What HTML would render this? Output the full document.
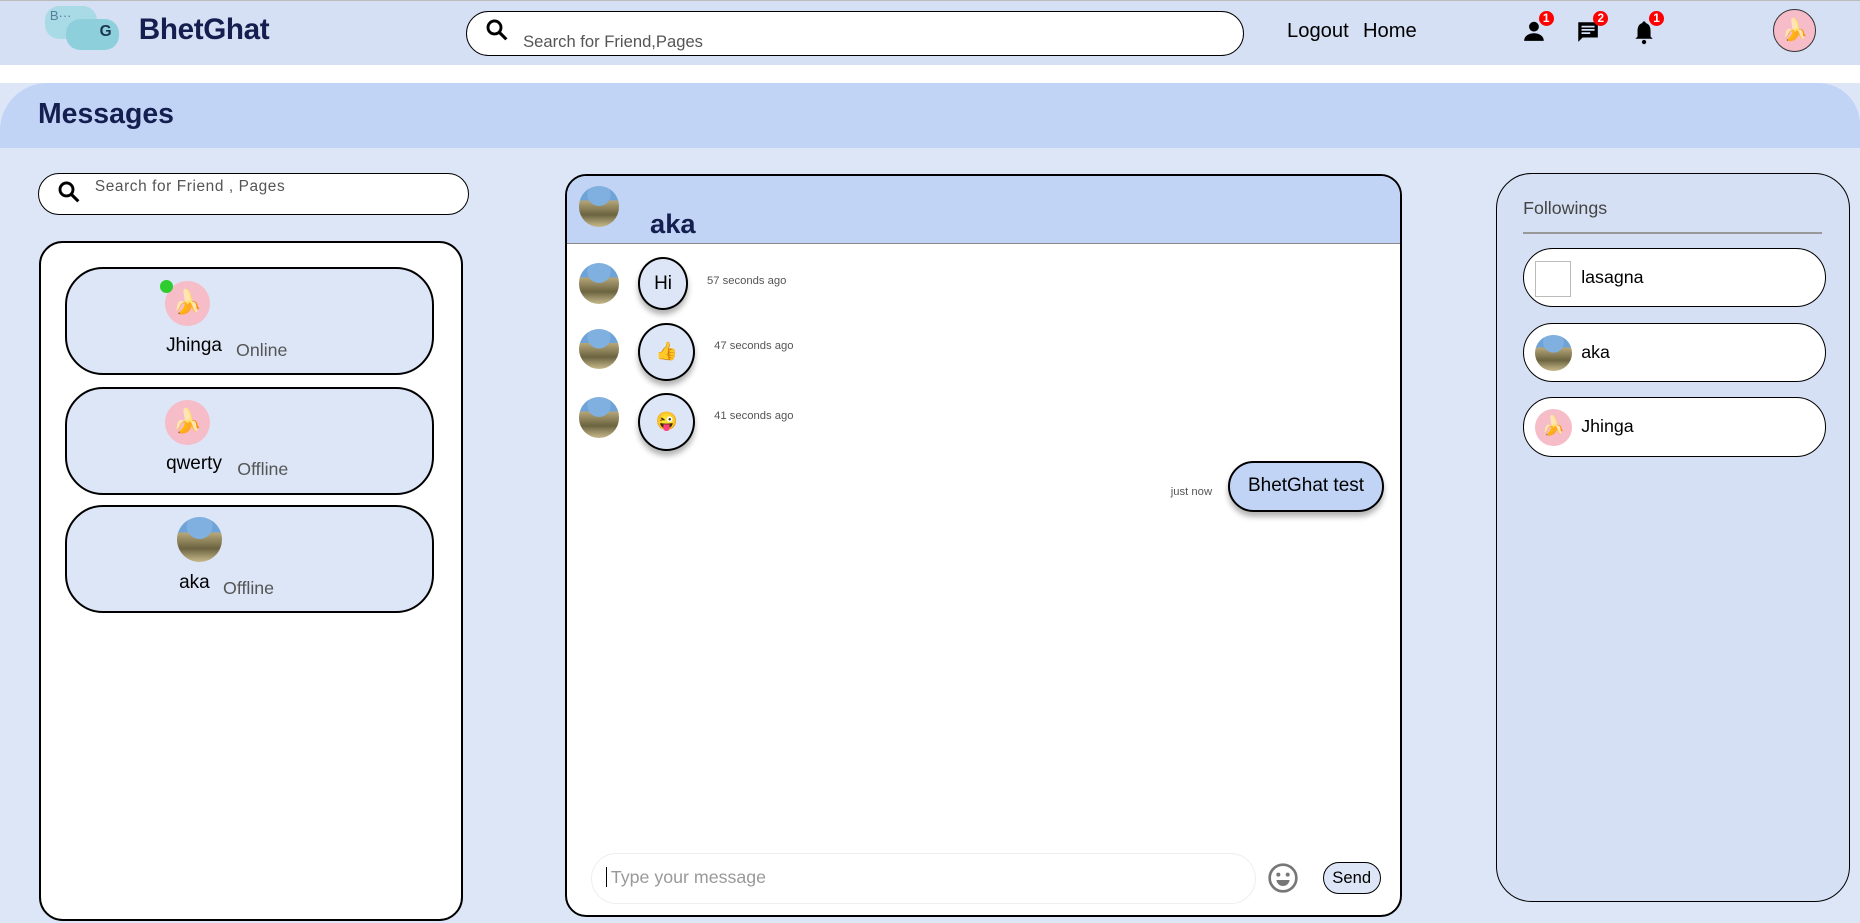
<!DOCTYPE html>
<html><head><meta charset="utf-8">
<style>
html,body{margin:0;padding:0;}
body{width:1568px;height:778px;zoom:1.18622;overflow:hidden;background:#dde6f7;font-family:"Liberation Sans",sans-serif;position:relative;}
.a{position:absolute;}
.hdr{left:0;top:0;width:1568px;height:55px;background:#d6e0f4;border-top:1px solid #bbb;box-sizing:border-box;}
.gap{left:0;top:55px;width:1568px;height:15px;background:#fff;}
.mbar{left:0;top:70px;width:1568px;height:55px;background:#c2d4f5;border-radius:40px 35px 0 0;}
.round{border:2px solid #000;box-sizing:border-box;}
.av{border-radius:50%;overflow:hidden;}
.ban{background:#f6bcc8;}
.pic{background:radial-gradient(circle at 50% 20%,#7fb0e0 0 30%,transparent 31%),linear-gradient(#6ea3d8 0 35%,#b7a77a 35%,#6b6440 70%,#c8b98c);}
.card{left:55px;width:311px;height:91px;border:2px solid #000;border-radius:32px;background:#dde6f7;box-sizing:border-box;}
.bub{background:#dde6f7;border:2px solid #000;border-radius:50%;box-sizing:border-box;box-shadow:0 4px 5px rgba(0,0,0,.3);display:flex;align-items:center;justify-content:center;}
.t{font-size:9.5px;color:#555;}
.fi{left:1284px;width:255px;height:50px;border:1px solid #000;border-radius:25px;background:#fff;box-sizing:border-box;}
.badge{width:13px;height:13px;border-radius:50%;background:#f00;color:#fff;font-size:10px;font-weight:bold;text-align:center;line-height:13px;}
</style></head><body>
<div class="a hdr"></div>
<div class="a" style="left:38px;top:5px;width:44px;height:28px;background:#a9dbe6;border-radius:12px;"></div>
<div class="a" style="left:56px;top:16px;width:44px;height:26px;background:#8ecfdc;border-radius:12px;"></div>
<div class="a" style="left:42px;top:7px;font-size:11px;color:#5a7f9b;">B···</div>
<div class="a" style="left:84px;top:19px;font-size:13px;font-weight:bold;color:#1c3550;">G</div>
<div class="a" style="left:117px;top:11px;font-size:25px;font-weight:bold;color:#141e4f;letter-spacing:-0.3px;">BhetGhat</div>
<div class="a" style="left:393px;top:9px;width:656px;height:38px;background:#fff;border:1px solid #000;border-radius:20px;box-sizing:border-box;"></div>
<svg class="a" style="left:409px;top:15px" width="20" height="20" viewBox="0 0 20 20"><circle cx="8" cy="8" r="5.5" fill="none" stroke="#000" stroke-width="2.4"/><path d="M12 12l6 6" stroke="#000" stroke-width="2.6"/></svg>
<div class="a" style="left:441px;top:27px;font-size:14px;color:#555;">Search for Friend,Pages</div>
<div class="a" style="left:1085px;top:17px;font-size:17px;color:#000;">Logout</div>
<div class="a" style="left:1149px;top:17px;font-size:17px;color:#000;">Home</div>
<svg class="a" style="left:1283px;top:15px" width="22" height="22" viewBox="0 0 24 24"><circle cx="11" cy="8" r="4.5"/><path d="M2 21c0-5 5-7 9-7s9 2 9 7z"/></svg>
<div class="a badge" style="left:1297px;top:9px">1</div>
<svg class="a" style="left:1328px;top:16px" width="22" height="22" viewBox="0 0 24 24"><path d="M3 3h18v14H7l-4 4z"/><path d="M6 7h12M6 10h12M6 13h8" stroke="#d6e0f4" stroke-width="1.6"/></svg>
<div class="a badge" style="left:1343px;top:9px">2</div>
<svg class="a" style="left:1375px;top:15px" width="22" height="24" viewBox="0 0 24 24"><path d="M12 2c1 0 1.5.7 1.5 1.5C17 4.5 18 7.5 18 11v5l2 2H4l2-2v-5c0-3.5 1-6.5 4.5-7.5C10.5 2.7 11 2 12 2z"/><circle cx="12" cy="21" r="2"/></svg>
<div class="a badge" style="left:1390px;top:9px">1</div>
<div class="a av ban" style="left:1495px;top:8px;width:36px;height:36px;border:1px solid #333;box-sizing:border-box;font-size:18px;line-height:34px;text-align:center;">🍌</div>
<div class="a gap"></div>
<div class="a mbar"></div>
<div class="a" style="left:32px;top:83px;font-size:24px;font-weight:bold;color:#141e4f;">Messages</div>

<div class="a" style="left:32px;top:146px;width:363px;height:35px;background:#fff;border:1px solid #000;border-radius:18px;box-sizing:border-box;"></div>
<svg class="a" style="left:48px;top:152px" width="20" height="20" viewBox="0 0 20 20"><circle cx="8" cy="8" r="5.5" fill="none" stroke="#000" stroke-width="2.4"/><path d="M12 12l6 6" stroke="#000" stroke-width="2.6"/></svg>
<div class="a" style="left:80px;top:150px;font-size:13px;color:#555;letter-spacing:.5px;">Search for Friend , Pages</div>
<div class="a round" style="left:33px;top:203px;width:357px;height:573px;background:#fff;border-radius:20px;"></div>
<div class="a card" style="top:225px"></div>
<div class="a av ban" style="left:139px;top:237px;width:38px;height:38px;font-size:20px;line-height:38px;text-align:center;">🍌</div>
<div class="a" style="left:135px;top:236px;width:11px;height:11px;border-radius:50%;background:#2ecc2e;"></div>
<div class="a" style="left:140px;top:282px;font-size:16px;">Jhinga</div>
<div class="a" style="left:199px;top:287px;font-size:15px;color:#555;">Online</div>
<div class="a card" style="top:326px"></div>
<div class="a av ban" style="left:139px;top:337px;width:38px;height:38px;font-size:20px;line-height:38px;text-align:center;">🍌</div>
<div class="a" style="left:140px;top:382px;font-size:16px;">qwerty</div>
<div class="a" style="left:200px;top:387px;font-size:15px;color:#555;">Offline</div>
<div class="a card" style="top:426px"></div>
<div class="a av pic" style="left:149px;top:436px;width:38px;height:38px;"></div>
<div class="a" style="left:151px;top:482px;font-size:16px;">aka</div>
<div class="a" style="left:188px;top:487px;font-size:15px;color:#555;">Offline</div>

<div class="a round" style="left:476px;top:147px;width:706px;height:626px;background:#fff;border-radius:18px;overflow:hidden;">
 <div style="position:absolute;left:0;top:0;right:0;height:56px;background:#c2d4f5;border-bottom:1px solid #888;"></div>
</div>
<div class="a av pic" style="left:488px;top:157px;width:34px;height:34px;"></div>
<div class="a" style="left:548px;top:175px;font-size:23px;font-weight:bold;color:#141e4f;">aka</div>
<div class="a av pic" style="left:488px;top:222px;width:34px;height:34px;"></div>
<div class="a bub" style="left:538px;top:217px;width:42px;height:44px;font-size:16px;">Hi</div>
<div class="a t" style="left:596px;top:232px;">57 seconds ago</div>
<div class="a av pic" style="left:488px;top:277px;width:34px;height:34px;"></div>
<div class="a bub" style="left:538px;top:272px;width:48px;height:49px;font-size:15px;">👍</div>
<div class="a t" style="left:602px;top:287px;">47 seconds ago</div>
<div class="a av pic" style="left:488px;top:335px;width:34px;height:34px;"></div>
<div class="a bub" style="left:538px;top:331px;width:48px;height:49px;font-size:15px;">😜</div>
<div class="a t" style="left:602px;top:346px;">41 seconds ago</div>
<div class="a t" style="left:987px;top:410px;">just now</div>
<div class="a" style="left:1035px;top:389px;width:132px;height:43px;background:#c2d4f5;border:2px solid #000;border-radius:22px;box-sizing:border-box;box-shadow:0 4px 5px rgba(0,0,0,.3);font-size:16px;text-align:center;line-height:39px;">BhetGhat test</div>
<div class="a" style="left:498px;top:719px;width:561px;height:43px;border:1px solid #eee;border-radius:22px;box-sizing:border-box;"></div>
<div class="a" style="left:511px;top:731px;width:1px;height:17px;background:#000;"></div>
<div class="a" style="left:515px;top:731px;font-size:15px;color:#999;">Type your message</div>
<svg class="a" style="left:1068px;top:727px" width="27" height="27" viewBox="0 0 24 24"><circle cx="12" cy="12" r="10" fill="none" stroke="#777" stroke-width="2"/><circle cx="8.5" cy="9.5" r="1.5" fill="#777"/><circle cx="15.5" cy="9.5" r="1.5" fill="#777"/><path d="M7 13.5h10c-.6 3-2.5 4.5-5 4.5s-4.4-1.5-5-4.5z" fill="#777"/></svg>
<div class="a" style="left:1115px;top:727px;width:49px;height:27px;background:#dde6f7;border:1px solid #000;border-radius:14px;box-sizing:border-box;font-size:14px;text-align:center;line-height:25px;">Send</div>

<div class="a" style="left:1261px;top:146px;width:299px;height:614px;background:#d6e0f4;border:1px solid #000;border-radius:30px;box-sizing:border-box;"></div>
<div class="a" style="left:1284px;top:167px;font-size:15px;color:#444;">Followings</div>
<div class="a" style="left:1284px;top:196px;width:252px;height:1px;background:#999;"></div>
<div class="a fi" style="top:209px"></div>
<div class="a" style="left:1294px;top:220px;width:30px;height:30px;border:1px solid #bbb;box-sizing:border-box;"></div>
<div class="a" style="left:1333px;top:225px;font-size:15px;">lasagna</div>
<div class="a fi" style="top:272px"></div>
<div class="a av pic" style="left:1294px;top:282px;width:31px;height:31px;"></div>
<div class="a" style="left:1333px;top:288px;font-size:15px;">aka</div>
<div class="a fi" style="top:335px"></div>
<div class="a av ban" style="left:1294px;top:345px;width:31px;height:31px;font-size:16px;line-height:31px;text-align:center;">🍌</div>
<div class="a" style="left:1333px;top:351px;font-size:15px;">Jhinga</div>
</body></html>
